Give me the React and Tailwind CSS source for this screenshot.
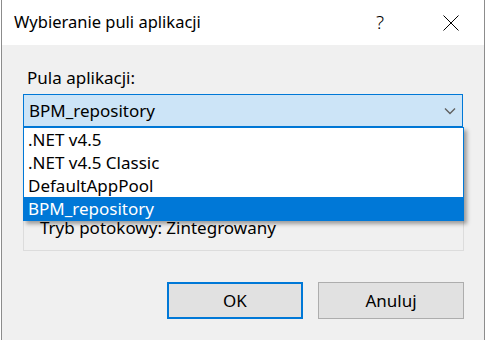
import React from "react";

const pools = [".NET v4.5", ".NET v4.5 Classic", "DefaultAppPool", "BPM_repository"];

function Chevron() {
  return (
    <svg width="12" height="8" viewBox="0 0 12 8" className="text-[#606060]">
      <path d="M1 1.5 L6 6.5 L11 1.5" fill="none" stroke="currentColor" strokeWidth="1.4" />
    </svg>
  );
}

function CloseIcon() {
  return (
    <svg width="16" height="16" viewBox="0 0 16 16">
      <path d="M0.5 0.5 L15.5 15.5 M15.5 0.5 L0.5 15.5" stroke="#000" strokeWidth="1" />
    </svg>
  );
}

export default function App() {
  const selected = "BPM_repository";

  return (
    <div className="w-[488px] h-[340px] bg-white overflow-hidden flex font-['Noto_Sans',sans-serif] text-black">
      <div className="ml-px w-[484px] h-full border-x border-[#8c8c8c] flex flex-col">
        {/* title bar */}
        <div className="h-[45px] bg-white flex items-center shrink-0">
          <span className="pl-[12px] text-[16.5px] leading-none">Wybieranie puli aplikacji</span>
          <span className="ml-auto mr-[59px] text-[19px] leading-none font-light">?</span>
          <span className="mr-[25px] flex">
            <CloseIcon />
          </span>
        </div>

        {/* body */}
        <div className="flex-1 bg-[#f0f0f0] pl-[21px] pt-[21px]">
          <div className="ml-[4px] text-[17px] leading-[23px]">Pula aplikacji:</div>

          <div className="mt-[5px] w-[440px] h-[33px] border border-[#0078d7] bg-[#cce4f7] flex items-center pl-[5px] pr-[6px]">
            <span className="text-[17px] leading-none">{selected}</span>
            <span className="ml-auto flex">
              <Chevron />
            </span>
          </div>

          <div className="relative pt-[13px]">
            <div className="w-[441px] h-[111px] border border-[#dcdcdc] flex flex-col justify-end pb-[15px] pl-[16px]">
              <span className="text-[17px] leading-[14px]">Tryb potokowy: Zintegrowany</span>
            </div>

            {/* open dropdown list */}
            <div className="absolute left-0 top-0 w-[441px] border border-[#0078d7] bg-white shadow-[3px_3px_4px_rgba(0,0,0,0.35)]">
              {pools.map((p) => (
                <div
                  key={p}
                  className={
                    p === selected
                      ? "h-[23px] leading-[24px] pl-[4px] text-[17px] bg-[#0078d7] text-white"
                      : "h-[23px] leading-[24px] pl-[4px] text-[17px]"
                  }
                >
                  {p}
                </div>
              ))}
            </div>
          </div>

          <div className="mt-[31px] w-[441px] flex justify-end gap-[15px]">
            <button className="w-[136px] h-[37px] border-2 border-[#0078d7] bg-[#e1e1e1] text-[17px]">
              OK
            </button>
            <button className="w-[146px] h-[37px] border border-[#adadad] bg-[#e1e1e1] text-[17px]">
              Anuluj
            </button>
          </div>
        </div>
      </div>
    </div>
  );
}
